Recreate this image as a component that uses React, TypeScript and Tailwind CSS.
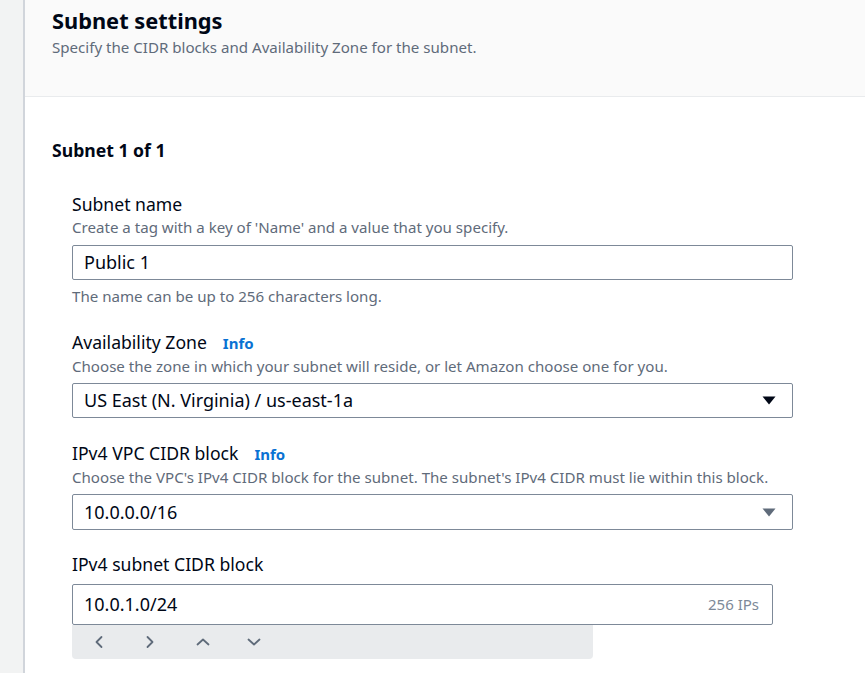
import React from "react";

const font = { fontFamily: '"Noto Sans", "Open Sans", Arial, sans-serif' };

function Caret({ muted }: { muted?: boolean }) {
  return (
    <svg width="14" height="9" viewBox="0 0 14 9" className={muted ? "text-[#5f6b7a]" : "text-[#000716]"}>
      <path d="M0.5 0.5 H13.5 L7 8.5 Z" fill="currentColor" />
    </svg>
  );
}

function Chevron({ dir }: { dir: "left" | "right" | "up" | "down" }) {
  const d =
    dir === "left"
      ? "M9.5 2 L4.5 7 L9.5 12"
      : dir === "right"
      ? "M4.5 2 L9.5 7 L4.5 12"
      : dir === "up"
      ? "M1.5 9.5 L7 4.5 L12.5 9.5"
      : "M1.5 4.5 L7 9.5 L12.5 4.5";
  return (
    <svg width="14" height="14" viewBox="0 0 14 14" fill="none">
      <path d={d} stroke="#5f6b7a" strokeWidth="1.8" strokeLinecap="round" strokeLinejoin="round" />
    </svg>
  );
}

function Label({ children, info }: { children: React.ReactNode; info?: boolean }) {
  return (
    <div className="flex items-baseline gap-[16px] text-[17.6px] leading-[22px] text-[#000716]">
      <span>{children}</span>
      {info && <span className="text-[15px] font-bold text-[#0972d3]">Info</span>}
    </div>
  );
}

function Desc({ children, className = "" }: { children: React.ReactNode; className?: string }) {
  return <div className={`text-[15.1px] leading-[20px] text-[#5f6b7a] ${className}`}>{children}</div>;
}

export default function App() {
  return (
    <div className="flex min-h-[673px] w-[865px] overflow-hidden bg-white" style={font}>
      <div className="w-[23px] shrink-0 border-r-2 border-[#d1d5db] bg-[#f2f3f3] box-content" />
      <div className="flex-1">
        <div className="border-b border-[#e9ebed] bg-[#fafafa] pl-[27px] pt-[8px] pb-[39px]">
          <h2 className="text-[21.8px] font-bold leading-[26px] text-[#000716]">Subnet settings</h2>
          <Desc className="mt-[3px]">Specify the CIDR blocks and Availability Zone for the subnet.</Desc>
        </div>

        <div className="pl-[27px] pt-[42px]">
          <div className="text-[17.6px] font-bold leading-[22px] text-[#000716]">Subnet 1 of 1</div>

          <div className="pl-[20px]">
            <div className="mt-[32px]">
              <Label>Subnet name</Label>
              <Desc className="mt-[2px]">Create a tag with a key of 'Name' and a value that you specify.</Desc>
              <div className="mt-2 flex h-[35px] w-[721px] items-center rounded-[2px] border border-[#7d8998] px-[11px] text-[18px] text-[#000716]">
                Public 1
              </div>
              <Desc className="mt-[6px]">The name can be up to 256 characters long.</Desc>
            </div>

            <div className="mt-[25px]">
              <Label info>Availability Zone</Label>
              <Desc className="mt-[2px]">Choose the zone in which your subnet will reside, or let Amazon choose one for you.</Desc>
              <div className="mt-[7px] flex h-[35px] w-[721px] items-center justify-between rounded-[2px] border border-[#7d8998] pl-[11px] pr-[16px] text-[18px] text-[#000716]">
                <span>US East (N. Virginia) / us-east-1a</span>
                <Caret />
              </div>
            </div>

            <div className="mt-[24px]">
              <Label info>IPv4 VPC CIDR block</Label>
              <Desc className="mt-[2px]">
                Choose the VPC's IPv4 CIDR block for the subnet. The subnet's IPv4 CIDR must lie within this block.
              </Desc>
              <div className="mt-[7px] flex h-[36px] w-[721px] items-center justify-between rounded-[2px] border border-[#7d8998] pl-[11px] pr-[16px] text-[18px] text-[#000716]">
                <span>10.0.0.0/16</span>
                <Caret muted />
              </div>
            </div>

            <div className="mt-[23px]">
              <Label>IPv4 subnet CIDR block</Label>
              <div className="mt-[9px] flex h-[41px] w-[701px] items-center justify-between rounded-[2px] border border-[#7d8998] pl-[11px] pr-[13px] text-[18px] text-[#000716]">
                <span>10.0.1.0/24</span>
                <span className="text-[15px] text-[#7d8998]">256 IPs</span>
              </div>
              <div className="flex h-[34px] w-[521px] items-center rounded-b-[4px] bg-[#e9ebed] pl-[20px]">
                <Chevron dir="left" />
                <span className="ml-[37px]"><Chevron dir="right" /></span>
                <span className="ml-[39px]"><Chevron dir="up" /></span>
                <span className="ml-[37px]"><Chevron dir="down" /></span>
              </div>
            </div>
          </div>
        </div>
      </div>
    </div>
  );
}
